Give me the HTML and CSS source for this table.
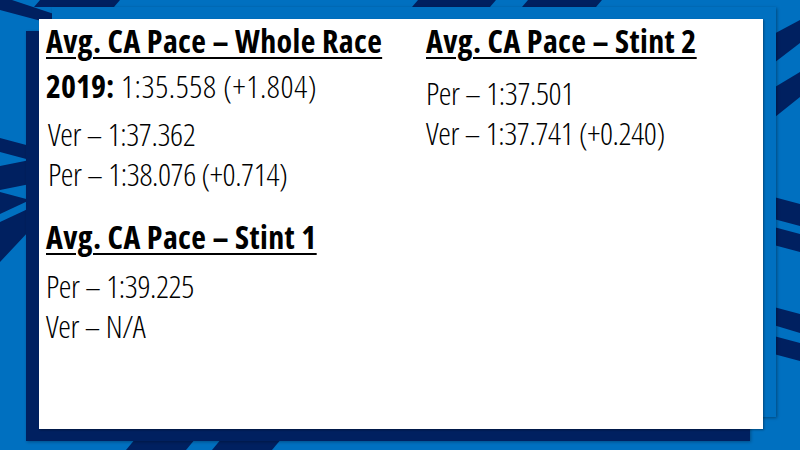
FILE: index.html
```html
<!DOCTYPE html>
<html lang="en">
<head>
<meta charset="utf-8">
<title>Avg. CA Pace</title>
<link rel="stylesheet" href="styles.css">
</head>
<body>
<div class="bg" aria-hidden="true">
  <svg width="800" height="450" viewBox="0 0 800 450">
    <g fill="#002060">
      <polygon points="0,0 12,0 60,16 60,26 0,10"/>
      <polygon points="34,7 40,0 120,0 114,7"/>
      <polygon points="412,7 418,0 496,0 490,7"/>
      <polygon points="522,7 528,0 602,0 596,7"/>
      <polygon points="0,138 30,146 30,160 0,152"/>
      <polygon points="0,166 30,160 30,184 0,190"/>
      <polygon points="0,192 30,200 0,214"/>
      <polygon points="0,222 30,208 30,230 0,262"/>
      <polygon points="770,36 800,20 800,43 770,66"/>
      <polygon points="770,90 800,72 800,97 770,121"/>
      <polygon points="770,196 800,204 800,226 770,218"/>
      <polygon points="770,226 800,234 800,252 770,244"/>
      <polygon points="770,306 800,314 800,333 770,324"/>
      <polygon points="770,335 800,343 800,361 770,353"/>
      <polygon points="126,450 136,438 196,438 186,450"/>
      <polygon points="212,450 222,438 282,438 272,450"/>
    </g>
  </svg>
</div>
<main class="card">
  <section class="col">
    <h2 class="head">Avg. CA Pace – Whole Race</h2>
    <p class="line year"><b class="year-label">2019:</b> 1:35.558 (+1.804)</p>
    <ul class="list list-sub">
      <li>Ver – 1:37.362</li>
      <li>Per – 1:38.076 (+0.714)</li>
    </ul>
    <h2 class="head head-second">Avg. CA Pace – Stint 1</h2>
    <ul class="list list-under-head">
      <li>Per – 1:39.225</li>
      <li>Ver – N/A</li>
    </ul>
  </section>
  <section class="col">
    <h2 class="head">Avg. CA Pace – Stint 2</h2>
    <ul class="list list-right">
      <li>Per – 1:37.501</li>
      <li>Ver – 1:37.741 (+0.240)</li>
    </ul>
  </section>
</main>
</body>
</html>
```
FILE: styles.css
```css
html, body {
  margin: 0;
  padding: 0;
}
body {
  width: 800px;
  height: 450px;
  overflow: hidden;
  position: relative;
  background: #0070c0;
  color: #000;
  font-family: "Open Sans", "Liberation Sans", sans-serif;
  font-stretch: 75%;
}
.bg {
  position: absolute;
  inset: 0;
}
.bg svg {
  display: block;
}
.card {
  position: relative;
  box-sizing: border-box;
  width: 724px;
  height: 410px;
  margin: 19px 0 0 39px;
  padding: 2px 0 0 7px;
  background: #fff;
  display: grid;
  grid-template-columns: 380px 1fr;
  align-content: start;
  box-shadow:
    1px 1px 2px rgba(0, 0, 0, 0.35),
    -13px 12px 0 #002060,
    -12px 13px 3px rgba(0, 0, 0, 0.3),
    13px -12px 0 #0070c0,
    14px -11px 3px rgba(0, 0, 0, 0.35);
}
.col {
  min-width: 0;
}
.head {
  margin: 0;
  font-size: 32px;
  font-weight: 700;
  line-height: 40px;
  letter-spacing: 0.4px;
  white-space: nowrap;
  text-decoration: underline;
  text-decoration-thickness: 2px;
  text-underline-offset: 4px;
}
.line,
.list li {
  font-size: 32px;
  font-weight: 300;
  line-height: 40px;
  white-space: nowrap;
}
.line {
  margin: 5px 0 0;
  letter-spacing: 0.6px;
}
.list li {
  letter-spacing: -0.4px;
}
.year-label {
  font-weight: 700;
  letter-spacing: 0;
}
.list {
  list-style: none;
  margin: 8px 0 0;
  padding: 0;
}
.list-sub {
  margin-left: 2px;
}
.head-second {
  margin-top: 23px;
}
.list-under-head {
  margin-top: 9px;
}
.list-right {
  margin-top: 12px;
}
```
